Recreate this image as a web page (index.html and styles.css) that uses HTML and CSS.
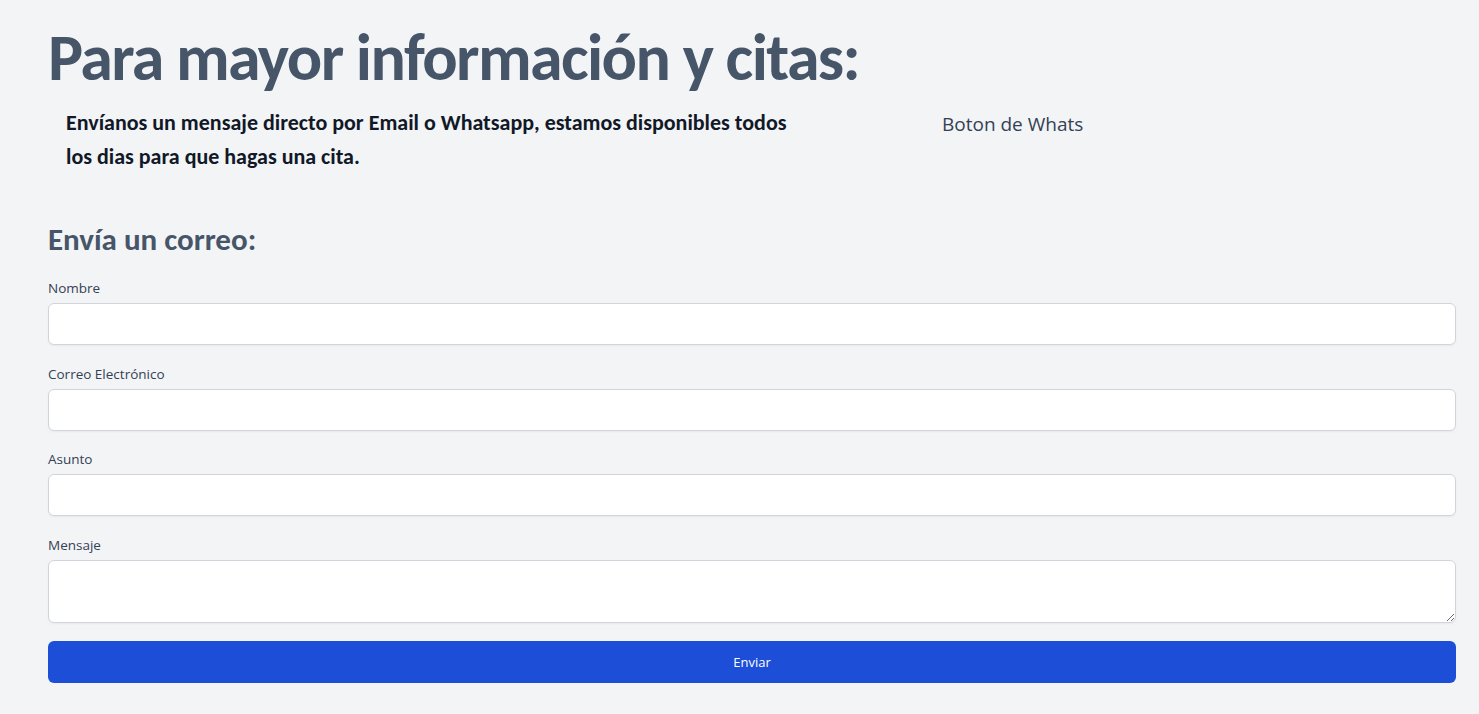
FILE: index.html
```html
<!DOCTYPE html>
<html lang="es">
<head>
<meta charset="utf-8">
<title>Contacto</title>
<link rel="stylesheet" href="styles.css">
</head>
<body>
<main class="page">
  <h1 class="title">Para mayor información y citas:</h1>
  <section class="intro">
    <p class="intro-text">Envíanos un mensaje directo por Email o Whatsapp, estamos disponibles todos los dias para que hagas una cita.</p>
    <div class="whats">Boton de Whats</div>
  </section>
  <h2 class="subtitle">Envía un correo:</h2>
  <form class="form">
    <div class="field">
      <label class="label" for="nombre">Nombre</label>
      <input class="input" id="nombre" type="text">
    </div>
    <div class="field">
      <label class="label" for="correo">Correo Electrónico</label>
      <input class="input" id="correo" type="email">
    </div>
    <div class="field">
      <label class="label" for="asunto">Asunto</label>
      <input class="input" id="asunto" type="text">
    </div>
    <div class="field">
      <label class="label" for="mensaje">Mensaje</label>
      <textarea class="input textarea" id="mensaje"></textarea>
    </div>
    <button class="button" type="button">Enviar</button>
  </form>
</main>
</body>
</html>
```

FILE: styles.css
```css
* { box-sizing: border-box; }
html, body { margin: 0; padding: 0; }
body {
  background: #f3f4f6;
  font-family: "Open Sans", "Noto Sans", sans-serif;
  color: #334155;
}
.page {
  padding: 20px 23px 0 48px;
}
.title {
  margin: 0;
  font-family: Carlito, Calibri, Lato, sans-serif;
  font-weight: 700;
  font-size: 66px;
  line-height: 76px;
  color: #475569;
  letter-spacing: -1.6px;
}
.intro {
  display: flex;
  align-items: flex-start;
  padding: 10px 0 0 18px;
}
.intro-text {
  margin: 0;
  width: 740px;
  flex: none;
  font-family: Carlito, Calibri, Lato, sans-serif;
  font-weight: 700;
  font-size: 22px;
  line-height: 34px;
  color: #111827;
}
.whats {
  margin-left: 136px;
  padding-top: 6px;
  font-size: 19px;
  line-height: 24px;
  color: #334155;
}
.subtitle {
  margin: 45px 0 0;
  font-family: Carlito, Calibri, Lato, sans-serif;
  font-weight: 700;
  font-size: 31px;
  line-height: 40px;
  color: #475569;
}
.form {
  display: flex;
  flex-direction: column;
  margin-top: 20px;
}
.field {
  display: flex;
  flex-direction: column;
  margin-bottom: 19.5px;
}
.label {
  font-size: 13.5px;
  line-height: 18px;
  color: #334155;
  margin-bottom: 6px;
}
.input {
  display: block;
  width: 100%;
  height: 42px;
  background: #fff;
  border: 1px solid #d1d5db;
  border-radius: 6px;
  box-shadow: 0 1px 2px rgba(0,0,0,0.05);
  font: inherit;
}
.textarea {
  height: 63px;
  resize: vertical;
}
.button {
  margin-top: -1px;
  height: 42px;
  width: 100%;
  border: 0;
  border-radius: 6px;
  background: #1d4ed8;
  color: #fff;
  font-family: "Open Sans", "Noto Sans", sans-serif;
  font-size: 13px;
  font-weight: 500;
}
```
